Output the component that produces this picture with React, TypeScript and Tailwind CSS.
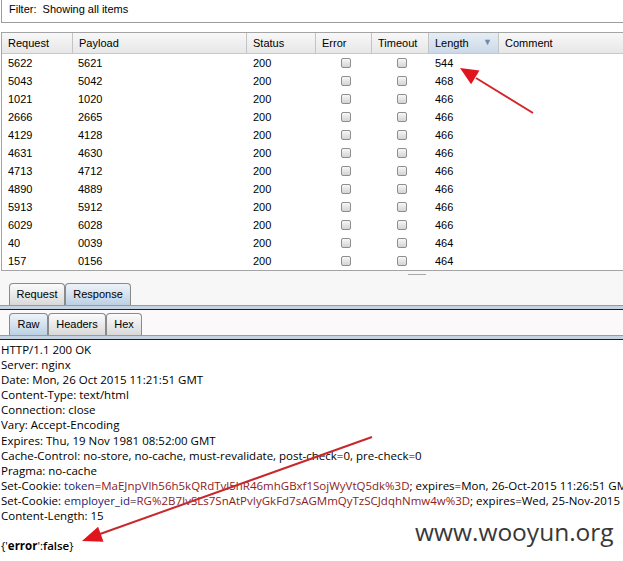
import React from "react";

type Row = { req: string; payload: string; status: string; length: string };

const rows: Row[] = [
  { req: "5622", payload: "5621", status: "200", length: "544" },
  { req: "5043", payload: "5042", status: "200", length: "468" },
  { req: "1021", payload: "1020", status: "200", length: "466" },
  { req: "2666", payload: "2665", status: "200", length: "466" },
  { req: "4129", payload: "4128", status: "200", length: "466" },
  { req: "4631", payload: "4630", status: "200", length: "466" },
  { req: "4713", payload: "4712", status: "200", length: "466" },
  { req: "4890", payload: "4889", status: "200", length: "466" },
  { req: "5913", payload: "5912", status: "200", length: "466" },
  { req: "6029", payload: "6028", status: "200", length: "466" },
  { req: "40", payload: "0039", status: "200", length: "464" },
  { req: "157", payload: "0156", status: "200", length: "464" },
];

function Checkbox() {
  return (
    <span className="block h-[10px] w-[10px] rounded-[2px] border border-[#8e8e8e] bg-gradient-to-b from-[#f7f7f7] to-[#d4d4d4]" />
  );
}

function HeaderCell({
  label,
  width,
  active,
}: {
  label: string;
  width: string;
  active?: boolean;
}) {
  return (
    <div
      className={`${width} flex h-full shrink-0 items-center justify-between border-r border-[#c4c4c4] pl-[6px] pr-[6px] ${
        active ? "bg-gradient-to-b from-[#e6eef6] to-[#cbd9e7]" : ""
      }`}
    >
      <span>{label}</span>
      {active && <span className="text-[9px] text-[#6f89a8]">▼</span>}
    </div>
  );
}

function Tab({
  label,
  width,
  selected,
}: {
  label: string;
  width: string;
  selected?: boolean;
}) {
  return (
    <div
      className={`${width} flex h-[22px] items-center justify-center rounded-t-[4px] border border-b-0 border-[#8a8a8a] ${
        selected
          ? "bg-gradient-to-b from-[#eef3f9] to-[#bcd0e4]"
          : "bg-gradient-to-b from-[#fbfbfb] to-[#d9d9d9]"
      }`}
    >
      {label}
    </div>
  );
}

function TabRule() {
  return (
    <div>
      <div className="h-px bg-[#9a9a9a]" />
      <div className="h-[3px] bg-[#c5d2e1]" />
      <div className="h-px bg-[#1e1e1e]" />
    </div>
  );
}

export default function App() {
  return (
    <div className="relative h-[561px] w-[623px] overflow-hidden bg-white font-['Liberation_Sans',Arial,sans-serif] text-[11px] text-black">
      {/* filter bar */}
      <div className="ml-px h-[23px] border-b border-l border-[#9c9c9c] pl-[7px] pt-[2px] leading-[14px]">
        Filter:&nbsp; Showing all items
      </div>

      {/* results table */}
      <div className="ml-px mt-[9px] h-[239px] border-b border-l border-t border-[#a4a4a4]">
        <div className="flex h-[21px] border-b border-[#c8c8c8] bg-gradient-to-b from-[#f8f8f8] to-[#e7e7e7]">
          <HeaderCell label="Request" width="w-[71px]" />
          <HeaderCell label="Payload" width="w-[174px]" />
          <HeaderCell label="Status" width="w-[69px]" />
          <HeaderCell label="Error" width="w-[56px]" />
          <HeaderCell label="Timeout" width="w-[57px]" />
          <HeaderCell label="Length" width="w-[70px]" active />
          <HeaderCell label="Comment" width="w-[140px]" />
        </div>
        {rows.map((r) => (
          <div key={r.req} className="flex h-[18px] items-center">
            <div className="w-[71px] shrink-0 pl-[6px]">{r.req}</div>
            <div className="w-[174px] shrink-0 pl-[5px]">{r.payload}</div>
            <div className="w-[69px] shrink-0 pl-[6px]">{r.status}</div>
            <div className="flex w-[56px] shrink-0 justify-center pl-[4px]">
              <Checkbox />
            </div>
            <div className="flex w-[57px] shrink-0 justify-center pl-[3px]">
              <Checkbox />
            </div>
            <div className="w-[70px] shrink-0 pl-[6px]">{r.length}</div>
          </div>
        ))}
      </div>

      {/* splitter */}
      <div className="flex h-[12px] justify-center bg-[#f7f7f7] pl-[210px] pt-[3px]">
        <span className="h-px w-[18px] bg-[#a8a8a8]" />
      </div>

      {/* request / response tabs */}
      <div className="bg-[#f7f7f7]">
        <div className="flex pl-[9px]">
          <Tab label="Request" width="w-[56px]" />
          <Tab label="Response" width="w-[66px]" selected />
        </div>
        <TabRule />
      </div>

      {/* raw / headers / hex tabs */}
      <div className="bg-[#fbf9f9] pt-[3px]">
        <div className="flex pl-[9px]">
          <Tab label="Raw" width="w-[39px]" selected />
          <Tab label="Headers" width="w-[58px]" />
          <Tab label="Hex" width="w-[36px]" />
        </div>
        <TabRule />
      </div>

      {/* raw response */}
      <div className="overflow-hidden whitespace-nowrap pl-px pt-[2px] font-['Open_Sans',sans-serif] text-[11.5px] leading-[15.1px]">
        <div>HTTP/1.1 200 OK</div>
        <div>Server: nginx</div>
        <div>Date: Mon, 26 Oct 2015 11:21:51 GMT</div>
        <div>Content-Type: text/html</div>
        <div>Connection: close</div>
        <div>Vary: Accept-Encoding</div>
        <div>Expires: Thu, 19 Nov 1981 08:52:00 GMT</div>
        <div>Cache-Control: no-store, no-cache, must-revalidate, post-check=0, pre-check=0</div>
        <div>Pragma: no-cache</div>
        <div>
          Set-Cookie: <span className="text-[#1f2470]">token</span>=
          <span className="text-[#8a1c1c]">MaEJnpVlh56h5kQRdTvl5hR46mhGBxf1SojWyVtQ5dk%3D</span>; expires=Mon,
          26-Oct-2015 11:26:51 GMT
        </div>
        <div>
          Set-Cookie: <span className="text-[#1f2470]">employer_id</span>=
          <span className="text-[#8a1c1c]">RG%2B7IvSLs7SnAtPvIyGkFd7sAGMmQyTzSCJdqhNmw4w%3D</span>; expires=Wed,
          25-Nov-2015 11:26:51 GMT
        </div>
        <div>Content-Length: 15</div>
        <div>&nbsp;</div>
        <div>
          {"{'"}
          <span className="font-bold">error</span>
          {"':"}
          <span className="font-semibold">false</span>
          {"}"}
        </div>
      </div>

      {/* watermark */}
      <div className="absolute left-[415px] top-[516px] font-['Open_Sans',sans-serif] text-[24.5px] leading-[32px] text-[#383838]">
        www.wooyun.org
      </div>

      {/* annotation arrows */}
      <svg className="pointer-events-none absolute left-0 top-0" width="623" height="561">
        <line x1="533" y1="113" x2="476" y2="78" stroke="#d3262a" strokeWidth="2" />
        <polygon points="460,68 479.5,70.6 471.1,84.2" fill="#e0141c" />
        <line x1="372" y1="437" x2="100" y2="534" stroke="#c8282c" strokeWidth="2" />
        <polygon points="82,541 103.5,541.7 98.1,526.7" fill="#e0141c" />
      </svg>
    </div>
  );
}
